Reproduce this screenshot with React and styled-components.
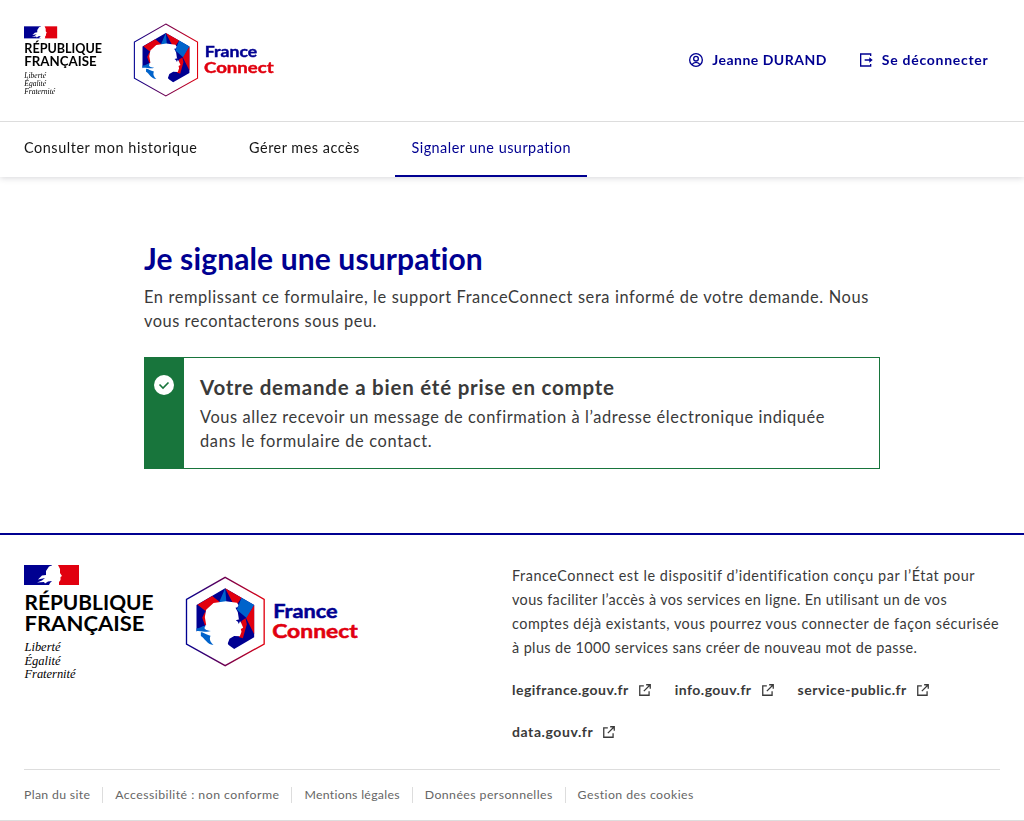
import React from "react";
import styled, { createGlobalStyle } from "styled-components";

const Global = createGlobalStyle`
  *{box-sizing:border-box}
  body{margin:0;background:#fff;color:#3a3a3a;font-family:Lato,"Noto Sans",sans-serif;font-size:16.4px;line-height:24px;font-variant-ligatures:none}
  p,h1,h3,ul{margin:0;padding:0}
  a{color:inherit;text-decoration:none}
`;
const Header = styled.header`filter:drop-shadow(0 1px 3px rgba(0,0,18,.16));background:#fff;`;
const Top = styled.div`height:122px;border-bottom:1px solid #ddd;padding:25px 24px 0;display:flex;align-items:flex-start;`;
const Gov = styled.svg`display:block;flex:none;`;
const Connect = styled.svg`display:block;flex:none;margin:${p => p.$m};`;
const Tools = styled.div`margin-left:auto;display:flex;gap:31px;padding:23px 11.500px 0 0;color:#000091;`;
const Tool = styled.a`display:flex;align-items:center;gap:8px;font-size:14px;font-weight:700;white-space:nowrap;letter-spacing:${p => p.$ls}px;`;
const Nav = styled.nav`height:55px;display:flex;padding:0 8px;gap:19.500px;`;
const NavItem = styled.a`padding:14px 16.200px 0 16px;font-size:14.400px;height:55px;white-space:nowrap;letter-spacing:${p => p.$ls}px;
  color:${p => (p.$on ? "#000091" : "#161616")};border-bottom:2px solid ${p => (p.$on ? "#000091" : "transparent")};`;
const Main = styled.main`width:736px;margin:0 auto;padding:61px 0 64px;`;
const Title = styled.h1`color:#000091;font-size:30px;line-height:40px;font-weight:700;white-space:nowrap;letter-spacing:.13px;margin-bottom:7px;`;
const Text = styled.p`white-space:nowrap;`;
const Line = styled.span`display:block;letter-spacing:${p => p.$ls || 0}px;`;
const Alert = styled.section`margin-top:24px;height:112px;border:1px solid #18753c;display:flex;`;
const AlertSide = styled.div`width:39px;background:#18753c;padding:17px 0 0 9px;svg{display:block}`;
const AlertBody = styled.div`padding:15px 16px;`;
const AlertTitle = styled.h3`font-size:20.500px;line-height:28px;white-space:nowrap;margin-bottom:4px;letter-spacing:.77px;`;
const Footer = styled.footer`border-top:2px solid #000091;height:288px;border-bottom:1px solid #ddd;padding:0 24px;`;
const FooterTop = styled.div`height:234px;display:flex;padding-top:29px;`;
const Brand = styled.div`width:488px;display:flex;align-items:flex-start;padding-top:1px;`;
const Desc = styled.div`font-size:14.400px;white-space:nowrap;`;
const Sites = styled.div`display:flex;flex-wrap:wrap;width:488px;gap:18px 23px;margin-top:18px;font-size:14px;`;
const Site = styled.a`font-weight:700;display:flex;align-items:center;gap:9px;letter-spacing:${p => p.$ls}px;`;
const Bottom = styled.div`border-top:1px solid #ddd;display:flex;padding-top:17px;color:#666;font-size:12.300px;line-height:16px;`;
const Legal = styled.a`white-space:nowrap;letter-spacing:${p => p.$ls}px;& + &{margin-left:11.900px;padding-left:12px;border-left:1px solid #ddd;}`;

const FONT = "Lato,sans-serif";
function RepubliqueLogo({ w, h }) {
  return (
    <Gov width={w} height={h} viewBox="0 0 131 115" role="img">
      <path fill="#000091" d="M0 0h28v20H0z" />
      <path fill="#e1000f" d="M34 0h21v20H34z" />
      <path fill="#fff" d="M22 6 25 1.500 29 0H34L36 4 36 8 38 11 36.500 12 36.500 15 35 17 35 20H25L26 18 28 16 24 16.500 21 18.500 20 17 13 17.500 18 15.500 21 13 14 14.500 18 10.500 22 10Z" />
      <g fontFamily={FONT} fontWeight="700" fontSize="20.800" fill="#000">
        <text x="0.500" y="45" textLength="129" lengthAdjust="spacingAndGlyphs">RÉPUBLIQUE</text>
        <text x="0.500" y="66" textLength="120" lengthAdjust="spacingAndGlyphs">FRANÇAISE</text>
      </g>
      <g fontFamily="Liberation Serif,serif" fontStyle="italic" fontSize="12.500" fill="#000">
        <text x="0.500" y="86" textLength="36">Liberté</text>
        <text x="0.500" y="99.500" textLength="36">Égalité</text>
        <text x="0.500" y="113" textLength="51">Fraternité</text>
      </g>
    </Gov>
  );
}
function FranceConnectLogo({ w, h, id, m }) {
  return (
    <Connect width={w} height={h} viewBox="26.5 18 519 273" $m={m} role="img">
      <linearGradient id={id}><stop offset="0" stopColor="#000091" /><stop offset="1" stopColor="#e1000f" /></linearGradient>
      <path d="M147 22 264 88V222L147 287 31 222V88Z" fill="none" stroke={`url(#${id})`} strokeWidth="4" />
      <g transform="translate(24 15)">
        <path fill="#000091" d="M37 90 123 40 210 90V187L150 222 120 200 110 100 64 160 37 170Z" />
        <path fill="#e1000f" d="M40 89 84 63 108 82 70 106 64 108ZM54 128 64 108 68 150 62 150Z" />
        <path fill="#0063cb" d="M123 40 104 84H127ZM172 68 210 90 188 130 158 104Z" />
        <path fill="#e1000f" d="M123 40 172 68 156 92 146 84ZM210 90V178L186 130ZM172 138 184 130 188 148 176 190 164 186Z" />
        <path fill="#fff" d="M37 168 66 150 62 126 66 104 88 84 125 79 158 83 163 90 160 97 154 98 161 112 164 132 171 144 177 158 170 162 172 170 167 184 150 183 136 191 131 205 134 216 146 224 123 236 37 190Z" />
        <path fill="#000091" d="M155 136 166 133 168 137 164 147 161 140Z" />
        <path fill="#0063cb" d="M37 160C50 160 52 152 64 153 56 162 66 166 80 168 66 174 52 166 37 168ZM50 172C60 172 66 180 79 182 74 194 80 202 88 210 68 208 62 190 50 183Z" />
      </g>
      <g fontFamily={FONT} fontWeight="700" fontSize="55" strokeWidth="1.500">
        <text x="291" y="143" fill="#000091" stroke="#000091" textLength="193" lengthAdjust="spacingAndGlyphs">France</text>
        <text x="288" y="204" fill="#e1000f" stroke="#e1000f" textLength="257" lengthAdjust="spacingAndGlyphs">Connect</text>
      </g>
    </Connect>
  );
}
const User = () => <svg width="16" height="16" viewBox="0 0 24 24" fill="none" stroke="#000091" strokeWidth="2"><circle cx="12" cy="12" r="9.500" /><circle cx="12" cy="10" r="3.500" /><path d="M6 19c1.500-2.500 3.500-3.500 6-3.500s4.500 1 6 3.500" /></svg>;
const Exit = () => <svg width="16" height="16" viewBox="0 0 24 24" fill="none" stroke="#000091" strokeWidth="2"><path d="M19 6V3H4v18h15v-3M10 12h8" /><path d="m17 8 5 4-5 4z" fill="#000091" stroke="none" /></svg>;
const Ext = () => <svg width="14" height="14" viewBox="0 0 24 24" fill="none" stroke="#3a3a3a" strokeWidth="2.200"><path d="M10 5H3v16h16v-7M14 3h7v7M21 3l-11 11" /></svg>;

const SITES = [["legifrance.gouv.fr", 0.48], ["info.gouv.fr", 0.46], ["service-public.fr", 0.53], ["data.gouv.fr", 0.58]];
const LEGAL = [["Plan du site", 0.32], ["Accessibilité : non conforme", 0.47], ["Mentions légales", 0.29], ["Données personnelles", 0.43], ["Gestion des cookies", 0.45]];

export default function App() {
  return (
    <>
      <Global />
      <Header>
        <Top>
          <RepubliqueLogo w={79} h={72} />
          <FranceConnectLogo w={141} h={74} id="fc-header" m="-2px 0 0 30px" />
          <Tools><Tool $ls={0.48}><User />Jeanne DURAND</Tool><Tool $ls={0.73}><Exit />Se déconnecter</Tool></Tools>
        </Top>
        <Nav><NavItem $ls={0.57}>Consulter mon historique</NavItem><NavItem $ls={0.51}>Gérer mes accès</NavItem><NavItem $on $ls={0.49}>Signaler une usurpation</NavItem></Nav>
      </Header>
      <Main>
        <Title>Je signale une usurpation</Title>
        <Text><Line $ls={0.61}>En remplissant ce formulaire, le support FranceConnect sera informé de votre demande. Nous</Line><Line $ls={0.53}>vous recontacterons sous peu.</Line></Text>
        <Alert>
          <AlertSide><svg width="20" height="20" viewBox="0 0 20 20"><circle cx="10" cy="10" r="10" fill="#fff" /><path d="m5.500 9.500 3.500 3.500 5.500-5.500" fill="none" stroke="#18753c" strokeWidth="1.600" /></svg></AlertSide>
          <AlertBody>
            <AlertTitle>Votre demande a bien été prise en compte</AlertTitle>
            <Text><Line $ls={0.6}>Vous allez recevoir un message de confirmation à l’adresse électronique indiquée</Line><Line $ls={0.68}>dans le formulaire de contact.</Line></Text>
          </AlertBody>
        </Alert>
      </Main>
      <Footer>
        <FooterTop>
          <Brand><RepubliqueLogo w={131} h={115} /><FranceConnectLogo w={173} h={91} id="fc-footer" m="11px 0 0 30px" /></Brand>
          <Desc>
            <Line $ls={0.54}>FranceConnect est le dispositif d’identification conçu par l’État pour</Line>
            <Line $ls={0.38}>vous faciliter l’accès à vos services en ligne. En utilisant un de vos</Line>
            <Line $ls={0.5}>comptes déjà existants, vous pourrez vous connecter de façon sécurisée</Line>
            <Line $ls={0.4}>à plus de 1000 services sans créer de nouveau mot de passe.</Line>
            <Sites>{SITES.map(([s, ls]) => <Site key={s} $ls={ls}>{s}<Ext /></Site>)}</Sites>
          </Desc>
        </FooterTop>
        <Bottom>{LEGAL.map(([s, ls]) => <Legal key={s} $ls={ls}>{s}</Legal>)}</Bottom>
      </Footer>
    </>
  );
}
